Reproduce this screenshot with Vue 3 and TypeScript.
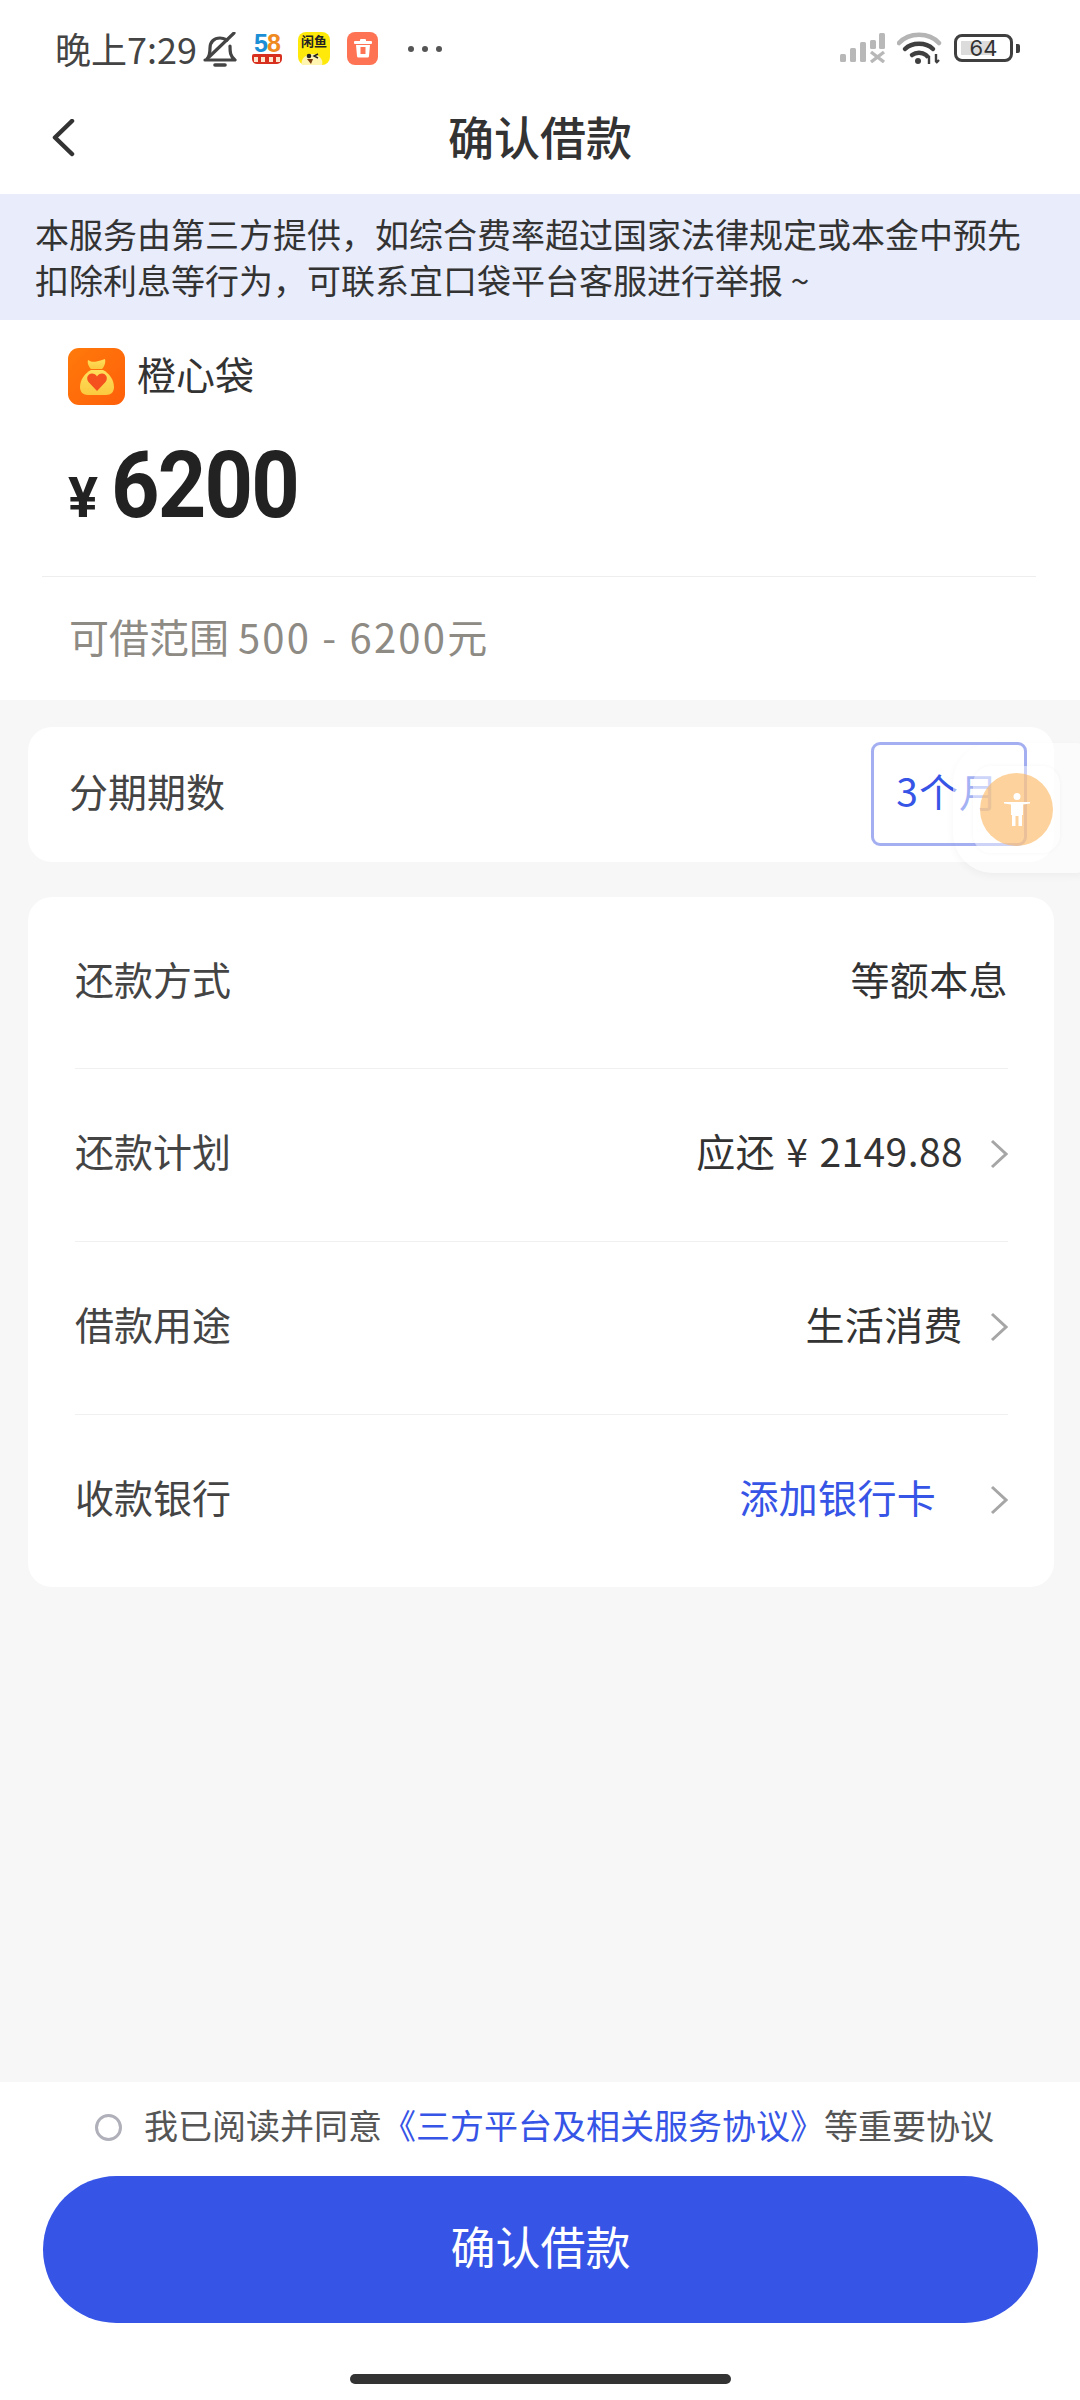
<script setup lang="ts">
interface Row { label: string; value: string; blue?: boolean; arrow: boolean }
const rows: Row[] = [
  { label: '还款方式', value: '等额本息', arrow: false },
  { label: '还款计划', value: '应还 ¥ 2149.88', arrow: true },
  { label: '借款用途', value: '生活消费', arrow: true },
  { label: '收款银行', value: '添加银行卡', blue: true, arrow: true }
]
</script>

<template>
  <div class="page">
    <div class="status">
      <div class="status-left">
        <span class="time">晚上7:29</span>
        <svg class="bell" width="34" height="36" viewBox="0 0 34 36" fill="none" stroke="#444" stroke-width="3.2" stroke-linecap="round" stroke-linejoin="round">
          <path d="M4 27c3-3 3-7 3-11 0-6 4-10 10-10 3 0 5 1 7 2" />
          <path d="M27 14c0 6 0 10 5 14H2" />
          <path d="M6 25 31 1" />
          <path d="M12 33h10" stroke-width="3.6" />
        </svg>
        <div class="app-58">
          <span class="n58"><i class="five">5</i><i class="eight">8</i></span>
          <span class="ribbon"><b></b><b></b><b></b><b></b></span>
        </div>
        <div class="app-yellow">
          <span class="yt">闲鱼</span>
          <svg class="face" width="32" height="16" viewBox="0 0 32 16">
            <path d="M4 16c-2-6 4-11 10-11s12 5 10 11z" fill="#fff4b0" />
            <circle cx="11" cy="7" r="2.3" fill="#222" />
            <path d="M20 5l-4 2 4 2" stroke="#222" stroke-width="1.4" fill="none" />
            <path d="M9 10h6l-2 5z" fill="#7a3a10" />
          </svg>
        </div>
        <div class="app-orange">
          <svg width="20" height="20" viewBox="0 0 20 20" fill="#fff">
            <rect x="1" y="3" width="18" height="3" rx="1" />
            <rect x="7" y="1" width="6" height="3" rx="1" />
            <path d="M3 7h14l-1 11a1.500 1.500 0 0 1-1.500 1.500h-9A1.500 1.500 0 0 1 4 18z" />
            <rect x="7.500" y="9" width="5" height="7" fill="#ff7355" />
          </svg>
        </div>
        <div class="dots"><i></i><i></i><i></i></div>
      </div>
      <div class="status-right">
        <svg width="46" height="30" viewBox="0 0 46 30" fill="#b8b8b8">
          <rect x="0" y="21" width="6" height="8" rx="1.500" />
          <rect x="10" y="15" width="6" height="14" rx="1.500" />
          <rect x="20" y="9" width="6" height="20" rx="1.500" />
          <rect x="30" y="7" width="6" height="9" rx="1.500" />
          <rect x="39" y="0" width="6" height="16" rx="1.500" />
          <path d="M31 19l13 10M44 19 31 29" stroke="#b8b8b8" stroke-width="3.400" fill="none" />
        </svg>
        <svg width="46" height="34" viewBox="0 0 46 34" fill="none">
          <path d="M2 12C12 1 32 1 42 12" stroke="#b4b4b4" stroke-width="4.500" stroke-linecap="round" />
          <path d="M8 18c7-7 21-7 28 0" stroke="#3f3f3f" stroke-width="4.500" stroke-linecap="round" />
          <path d="M15 24c4-3 10-3 14 0" stroke="#3f3f3f" stroke-width="4.500" stroke-linecap="round" />
          <circle cx="21" cy="30" r="3" fill="#3f3f3f" />
          <path d="M32 33v-8M32 24l-3 3M39 23v8M39 32l3-3" stroke="#3f3f3f" stroke-width="2.400" />
        </svg>
        <div class="battery">
          <div class="battery-body"><span class="battery-fill"></span><span class="battery-num">64</span></div>
          <span class="battery-nub"></span>
        </div>
      </div>
    </div>

    <div class="nav">
      <svg class="back" width="24" height="38" viewBox="0 0 24 38" fill="none" stroke="#333" stroke-width="4.500" stroke-linecap="round" stroke-linejoin="round">
        <path d="M21 2 4 18.500 21 35" />
      </svg>
      <div class="title">确认借款</div>
    </div>

    <div class="notice">本服务由第三方提供，如综合费率超过国家法律规定或本金中预先<br />扣除利息等行为，可联系宜口袋平台客服进行举报 ~</div>

    <section class="product">
      <div class="brand">
        <div class="logo">
          <svg width="36" height="38" viewBox="0 0 36 38">
            <defs>
              <linearGradient id="bag" x1="0" y1="0" x2="0" y2="1">
                <stop offset="0" stop-color="#ffdf5c" />
                <stop offset="1" stop-color="#fbc93f" />
              </linearGradient>
            </defs>
            <path d="M9 2c3 2 6 2 8.500 1.500C20 3 23 2 26 1c1 4-1 8-3 10H12C10 9 8 5 9 2z" fill="url(#bag)" />
            <path d="M12 12h12c6 3 11 10 11 17 0 5-3 8-8 8H9c-5 0-8-3-8-8 0-7 5-14 11-17z" fill="url(#bag)" />
            <path d="M18 33 9.500 24c-3-4-.500-8.500 3.500-8.500 2 0 4 1 5 3 1-2 3-3 5-3 4 0 6.500 4.500 3.500 8.500z" fill="#f4511e" />
          </svg>
        </div>
        <span class="brand-name">橙心袋</span>
      </div>
      <div class="amount"><span class="yen">¥</span><span class="num">6200</span></div>
      <div class="range-wrap"><div class="range">可借范围 <span class="range-num">500 - 6200</span>元</div></div>
    </section>

    <main class="content">
      <div class="card term">
        <span class="label">分期期数</span>
        <span class="term-value">3个月</span>
      </div>
      <div class="card list">
        <div v-for="r in rows" :key="r.label" class="row">
          <span class="label">{{ r.label }}</span>
          <div class="row-right">
            <span :class="['value', { blue: r.blue }]">{{ r.value }}</span>
            <svg v-if="r.arrow" class="chev" width="18" height="30" viewBox="0 0 18 30" fill="none" stroke="#a6a6a6" stroke-width="3">
              <path d="M2 2l14 13L2 28" />
            </svg>
          </div>
        </div>
      </div>
    </main>

    <footer class="footer">
      <div class="agree">
        <span class="radio"></span>
        <span class="agree-text">我已阅读并同意<span class="link">《三方平台及相关服务协议》</span>等重要协议</span>
      </div>
      <div class="btn"><span class="btn-text">确认借款</span></div>
      <div class="home-wrap"><div class="home"></div></div>
    </footer>

    <div class="focus-box"></div>
    <div class="a11y-shadow"></div>
    <div class="a11y-square"></div>
    <div class="a11y">
      <svg width="26" height="33" viewBox="0 0 26 33" fill="#fff">
        <circle cx="13" cy="3.500" r="3.500" />
        <path d="M0 9h26v1.500l-7 1V22h-1v11h-3.500V23h-3v10H8V22H7V11.500l-7-1z" />
      </svg>
    </div>
  </div>
</template>

<style>
html, body { margin: 0; background: #fff; }
</style>

<style scoped>
.page {
  position: relative;
  width: 1080px;
  height: 2400px;
  display: flex;
  flex-direction: column;
  overflow: hidden;
  background: #fff;
  color: #333;
  font-family: "Noto Sans CJK SC", "Noto Sans", sans-serif;
}
.status {
  height: 96px;
  flex: none;
  display: flex;
  justify-content: space-between;
  align-items: center;
  padding: 0 60px 0 55px;
}
.status-left, .status-right { display: flex; align-items: center; }
.time { font-size: 36px; line-height: 40px; color: #444; width: 148px; white-space: nowrap; }
.bell { margin-right: 14px; margin-top: 4px; }
.app-58 { width: 32px; height: 30px; position: relative; margin-right: 15px; margin-top: 2px; }
.n58 { position: absolute; left: 3px; top: -3px; font: 700 25px/24px "Liberation Sans", sans-serif; letter-spacing: -1px; }
.n58 i { font-style: normal; }
.five { color: #1b8fd6; }
.eight { color: #ef8a1f; }
.ribbon { position: absolute; left: 1px; right: 1px; bottom: 0; height: 10px; background: #d8301f; border-radius: 2px 2px 5px 5px; display: flex; justify-content: space-around; align-items: center; }
.ribbon b { width: 4px; height: 5px; background: #ffe6cf; }
.app-yellow { position: relative; width: 32px; height: 33px; border-radius: 8px; background: #ffe90a; margin-right: 17px; display: flex; justify-content: center; }
.yt { font-size: 13px; line-height: 17px; color: #222; font-weight: 700; white-space: nowrap; }
.face { position: absolute; left: 0; bottom: 0; }
.app-orange { width: 31px; height: 33px; border-radius: 8px; background: #ff7355; display: flex; align-items: center; justify-content: center; margin-right: 30px; }
.dots { display: flex; gap: 8px; margin-top: 2px; }
.dots i { width: 6px; height: 6px; border-radius: 50%; background: #555; }
.status-right { gap: 11px; }
.battery { display: flex; align-items: center; gap: 3px; }
.battery-body { position: relative; width: 59px; height: 28px; box-sizing: border-box; border: 3px solid #3f3f3f; border-radius: 8px; overflow: hidden; display: flex; align-items: center; justify-content: center; }
.battery-fill { position: absolute; left: 4px; top: 4px; bottom: 4px; width: 60%; background: #dcdcdc; }
.battery-num { position: relative; font: 22px/22px "Inter", sans-serif; color: #333; }
.battery-nub { width: 4px; height: 9px; background: #3f3f3f; border-radius: 0 2px 2px 0; }

.nav { height: 98px; flex: none; position: relative; display: flex; align-items: center; justify-content: center; }
.back { position: absolute; left: 51px; top: 23px; }
.title { font-size: 46px; font-weight: 500; line-height: 78px; padding-bottom: 20px; color: #333; }

.notice {
  flex: none;
  height: 126px;
  box-sizing: border-box;
  padding: 17px 0 0 35px;
  background: #e9edfb;
  font-size: 34px;
  line-height: 46px;
  color: #333;
  white-space: nowrap;
}

.product { flex: none; height: 380px; box-sizing: border-box; padding-top: 28px; display: flex; flex-direction: column; }
.brand { display: flex; align-items: center; padding-left: 68px; gap: 12px; }
.logo { width: 57px; height: 57px; border-radius: 11px; background: linear-gradient(135deg, #ff7a0a, #ff5f0a); display: flex; align-items: center; justify-content: center; }
.brand-name { font-size: 39px; line-height: 51px; padding-bottom: 6px; color: #333; }
.amount { display: flex; align-items: baseline; padding-left: 68px; margin-top: 31px; height: 112px; color: #222; font-family: Roboto, sans-serif; font-weight: 700; }
.yen { font-size: 56px; line-height: 100px; width: 43px; }
.num { display: inline-block; font-size: 92px; line-height: 100px; letter-spacing: -2px; transform: scaleX(0.92); transform-origin: left center; }
.range-wrap { margin: 28px 44px 0 42px; border-top: 1px solid #eeeeee; }
.range { padding: 35px 0 0 27px; font-size: 40px; line-height: 48px; color: #8e8a84; white-space: nowrap; }
.range-num { letter-spacing: 2.2px; }

.content { flex: 1; background: #f7f7f7; padding: 27px 26px 0 28px; display: flex; flex-direction: column; gap: 35px; }
.card { background: #fff; border-radius: 24px; }
.term { height: 135px; display: flex; align-items: center; justify-content: space-between; padding: 0 55px 0 41px; box-sizing: border-box; }
.label { font-size: 39px; line-height: 50px; color: #444; padding-bottom: 10px; }
.term-value { font-size: 39px; line-height: 50px; color: #3654e6; letter-spacing: 1px; padding-bottom: 10px; }
.list { padding: 0 46px 0 47px; }
.row { height: 173px; display: flex; align-items: center; justify-content: space-between; border-top: 1px solid #f0f0f0; box-sizing: border-box; }
.row:first-child { border-top: none; height: 171px; }
.row-right { display: flex; align-items: center; }
.value { font-size: 39px; line-height: 50px; color: #333; white-space: nowrap; padding-bottom: 10px; letter-spacing: 0.4px; word-spacing: 2px; }
.value.blue { color: #3654e6; margin-right: 27px; letter-spacing: 0.3px; }
.chev { margin-left: 27px; margin-bottom: 2px; }

.footer { flex: none; height: 318px; background: #fff; display: flex; flex-direction: column; box-sizing: border-box; padding-top: 24px; }
.agree { display: flex; align-items: center; padding-left: 95px; height: 44px; gap: 22px; }
.radio { width: 27px; height: 27px; box-sizing: border-box; border: 3px solid #b0b0ba; border-radius: 50%; flex: none; margin-bottom: 2px; }
.agree-text { font-size: 34px; line-height: 40px; padding-bottom: 6px; color: #555; white-space: nowrap; }
.link { color: #3654e6; }
.btn { margin: 26px 42px 0 43px; height: 147px; border-radius: 74px; background: #3654e6; color: #fff; font-size: 45px; display: flex; align-items: center; justify-content: center; }
.btn-text { padding-bottom: 8px; }
.home-wrap { display: flex; justify-content: center; margin-top: 51px; }
.home { width: 381px; height: 10px; border-radius: 5px; background: #333; }

.focus-box { position: absolute; left: 871px; top: 742px; width: 156px; height: 104px; box-sizing: border-box; border: 3px solid rgba(90, 110, 230, 0.55); border-radius: 9px; z-index: 3; }
.a11y-shadow { position: absolute; left: 953px; top: 743px; width: 160px; height: 130px; border-radius: 40px; background: rgba(255, 255, 255, 0.55); box-shadow: 0 3px 8px rgba(0, 0, 0, 0.04); z-index: 2; }
.a11y-square { position: absolute; left: 973px; top: 766px; width: 87px; height: 87px; border-radius: 18px; background: rgba(255, 255, 255, 0.45); box-shadow: 0 0 4px rgba(0, 0, 0, 0.04); z-index: 3; }
.a11y { position: absolute; left: 980px; top: 773px; width: 73px; height: 73px; border-radius: 50%; background: rgba(252, 180, 90, 0.6); display: flex; align-items: center; justify-content: center; z-index: 4; }
</style>
